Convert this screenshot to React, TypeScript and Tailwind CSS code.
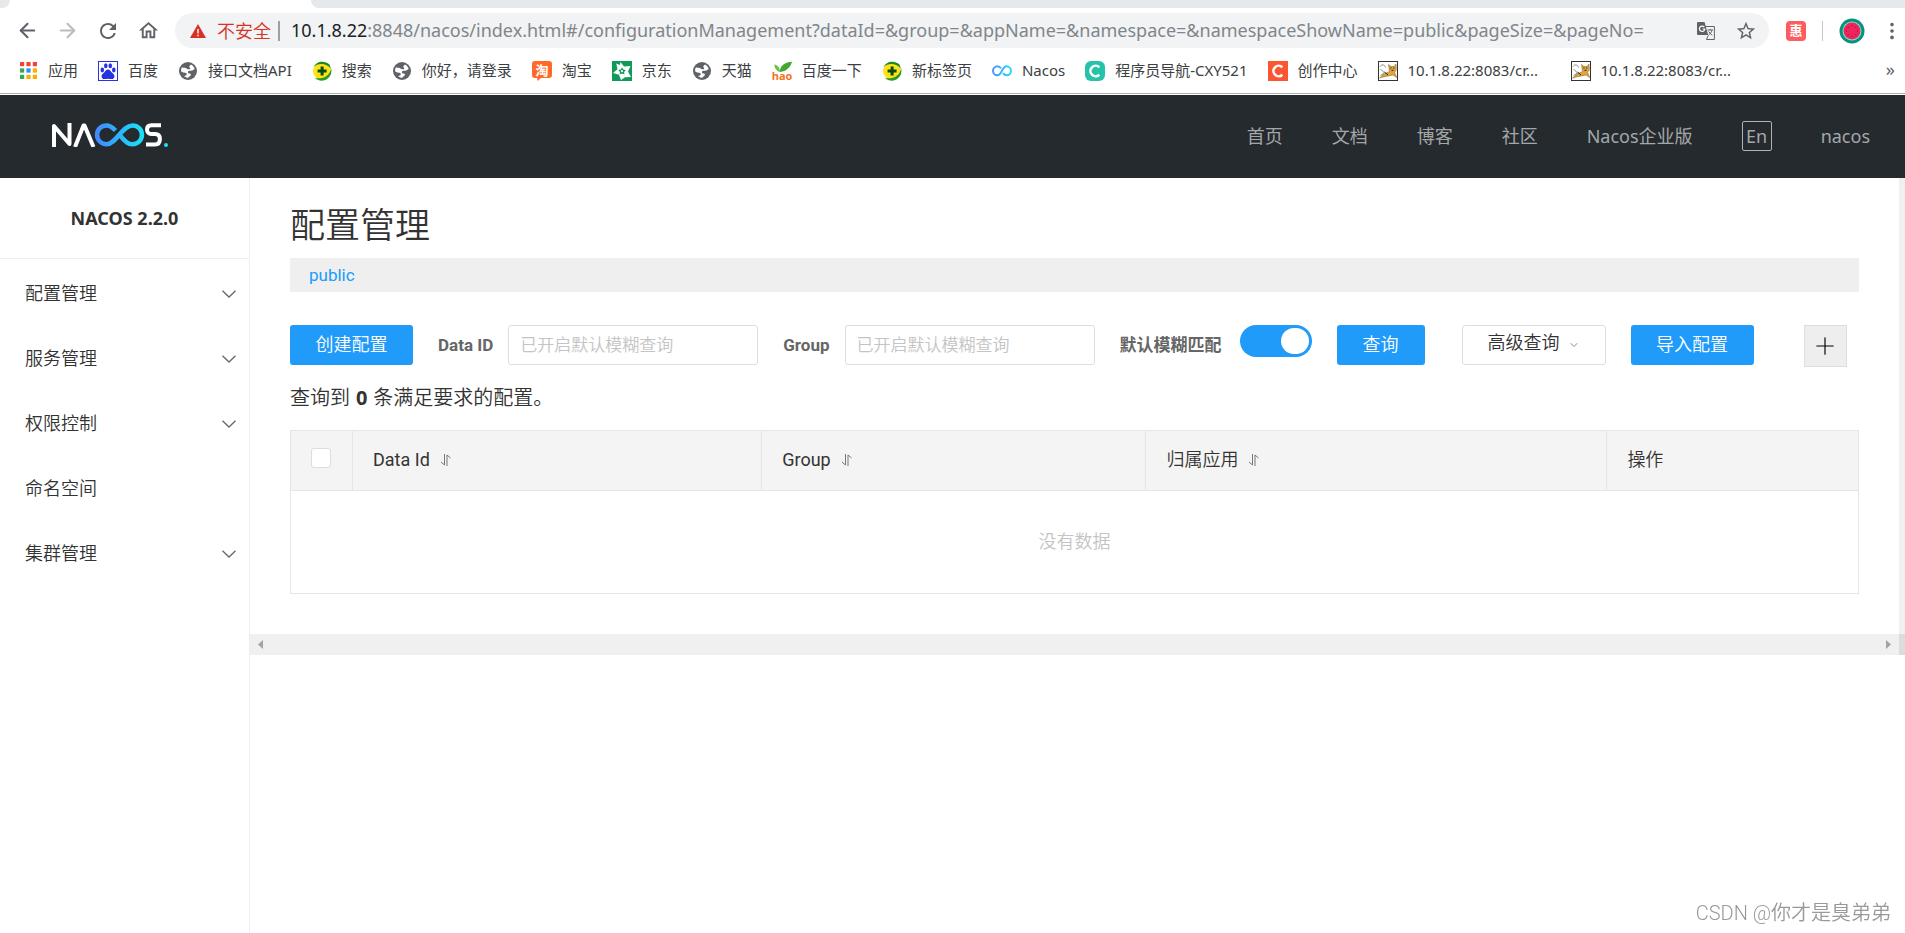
import type { ReactNode } from 'react'
import { ArrowLeft, ArrowRight, ChevronDown, MoreVertical, Plus } from 'lucide-react'
import { MdOutlineHome, MdRefresh, MdStarOutline } from 'react-icons/md'

const AppsIcon = () => {
  const colors = ['#f44336', '#f44336', '#f44336', '#34a853', '#2196f3', '#fbae00', '#34a853', '#fbae00', '#fbae00']
  return (
    <svg viewBox="0 0 17 17" className="size-[17px]">
      {colors.map((c, i) => (
        <rect key={i} x={(i % 3) * 6.4} y={Math.floor(i / 3) * 6.4} width="4.2" height="4.2" fill={c} />
      ))}
    </svg>
  )
}

const BaiduIcon = () => (
  <svg viewBox="0 0 20 20" className="size-5">
    <rect x="0.5" y="0.5" width="19" height="19" fill="#fff" stroke="#2932e1" />
    <g fill="#2932e1">
      <ellipse cx="4.3" cy="9" rx="1.8" ry="2.4" />
      <ellipse cx="7.8" cy="4.8" rx="1.8" ry="2.5" />
      <ellipse cx="12.3" cy="4.8" rx="1.8" ry="2.5" />
      <ellipse cx="15.8" cy="9" rx="1.8" ry="2.4" />
      <path d="M10 8.6c2 0 2.6 1.6 3.8 2.9 1.200 1.200 2.700 2 2.700 3.800 0 2-1.500 2.800-3 2.800-1.300 0-2.200-.4-3.500-.4s-2.200.4-3.500.4c-1.500 0-3-.8-3-2.800 0-1.800 1.500-2.600 2.700-3.800C7.400 10.200 8 8.600 10 8.600z" />
    </g>
  </svg>
)

const GlobeIcon = () => (
  <svg viewBox="0 0 18 18" className="size-[18px]">
    <circle cx="9" cy="9" r="9" fill="#5f6368" />
    <path d="M2.200 9.500c-.3-1.500 0-3 .8-4.200 1.500.9 3.800.2 5 1.500.8.9 2.800.7 3.200-.4.3-1-1.200-1.100-1-2 .2-.9 1.500-1 1.700-2 2 .9 3.300 2.600 3.900 4.600-1 .2-1.500 1.400-2.600 1.600-1.600.3-3.500-.5-4.200.8-.6 1.200.5 2 1.800 2.200 1.100.2 1.400 1 .8 2-.6.800-1.700 1-2.300 2.200-1.600 0-3-.6-4.200-1.500 1-.6 2.600-.8 2.700-2C7.900 10.500 5 11.200 2.200 9.500z" fill="#fff" />
  </svg>
)

const So360Icon = () => (
  <svg viewBox="0 0 20 20" className="size-5">
    <circle cx="10" cy="10" r="9" fill="#ffe21a" />
    <path d="M1.500 6C4 .5 12-1.500 17.500 3.500L19 8C15 2 6 1.500 1.500 6z" fill="#1c8a1c" />
    <path d="M3 17c5 4.500 13 3.500 16-4 .5-2 .6-4 .2-5.500C17.500 15 11 18.500 3 17z" fill="#2c9a20" />
    <path d="M8.600 5.500h3v3h3v3h-3v3h-3v-3h-3v-3h3z" fill="#0a4d0a" />
  </svg>
)

const TaobaoIcon = () => (
  <svg viewBox="0 0 20 20" className="size-5">
    <path d="M3 0h14a3 3 0 0 1 3 3v11a3 3 0 0 1-3 3H9l-3.500 3L5 17H3a3 3 0 0 1-3-3V3a3 3 0 0 1 3-3z" fill="#ff6a2b" />
    <text x="10" y="13.500" fontSize="13" fontWeight="700" textAnchor="middle" fill="#fff" fontFamily="'Noto Sans CJK SC', sans-serif">淘</text>
  </svg>
)

const JdIcon = () => (
  <svg viewBox="0 0 20 20" className="size-5">
    <rect width="20" height="20" fill="#109a5a" />
    <path d="M8.500 1l3.500 4.500 6.500-.5-2.500 5.500 3 5.500-6 .2L9 19l-2-5.200L1 12l4.500-3.800L4.300 2.500 8 4z" fill="#fff" />
    <path d="M10 6.300l1.300 2.200 2.500.4-1.700 2 .4 2.700-2.500-1.200-2.400 1.200.4-2.700-1.700-2 2.500-.4z" fill="#109a5a" />
    <circle cx="10" cy="10.200" r="1.100" fill="#fff" />
  </svg>
)

const HaoIcon = () => (
  <svg viewBox="0 0 20 20" className="size-5">
    <path d="M8 11C7.500 6 12 1 20 .8 18.500 6 14.500 10.500 8 11z" fill="#43a832" />
    <path d="M8 11C5.500 10.500 2.500 8 2.300 3.500 5.500 4 8 6.500 8 11z" fill="#6cc04a" />
    <text x="10" y="18.500" fontSize="11" fontWeight="700" textAnchor="middle" fill="#f4731c" fontFamily="'Open Sans', sans-serif">hao</text>
  </svg>
)

const NacosIcon = () => (
  <svg viewBox="0 0 20 20" className="size-5" fill="none" strokeWidth="2">
    <defs>
      <linearGradient id="nacos-mark" gradientUnits="userSpaceOnUse" x1="0" y1="0" x2="20" y2="0">
        <stop offset="0" stopColor="#4a90ff" />
        <stop offset="1" stopColor="#1fe0f5" />
      </linearGradient>
    </defs>
    <path stroke="url(#nacos-mark)" d="M9 7.400C8 6 7 5.300 5.500 5.300a4.500 4.500 0 0 0 0 9C10 14.300 10 5.300 14.500 5.300a4.500 4.500 0 0 1 0 9c-1.500 0-2.500-.7-3.500-2.100" />
  </svg>
)

const CIcon = ({ className }: { className: string }) => (
  <svg viewBox="0 0 20 20" className={`size-5 ${className}`} fill="none">
    <path d="M14.300 6.300a5.200 5.200 0 1 0 0 7.400" stroke="#fff" strokeWidth="2.600" />
  </svg>
)

const TomcatIcon = () => (
  <svg viewBox="0 0 20 20" className="size-5">
    <rect x="0.5" y="0.5" width="19" height="19" fill="#fff" stroke="#333" />
    <path d="M2 5.500c1.500-2.500 5-2 5.500 1M2.500 8L6.500 12l-4 2.500" stroke="#888" fill="none" />
    <path d="M1.500 17c2-1.500 4.500-4.500 8-5.500l2-1L10.500 3.500l2.500 2h3L18 3l.3 6-1.800 2.200 2.300 5.300-3.800-2.500-5 1L5 16z" fill="#e0a53a" stroke="#7a5a1c" strokeWidth=".5" />
    <path d="M12.300 7h1.200M15.200 7h1.200M13.500 9.300h2M6.500 11l3.500 3" stroke="#222" />
  </svg>
)

const TranslateIcon = () => (
  <svg viewBox="0 0 18 18" className="size-[18px]">
    <path d="M7 4.500h10.400v13H9.500" fill="#f1f3f4" stroke="#5f6368" />
    <path d="M1 0h6.500l3.700 13H1a1 1 0 0 1-1-1V1a1 1 0 0 1 1-1z" fill="#5f6368" />
    <path d="M7.300 5.200A2.700 2.700 0 1 0 7.800 7H5.500" stroke="#fff" strokeWidth="1.200" fill="none" />
    <path d="M10.500 8h5.500M13.200 7v1M15 8c-.5 2.500-2 4-3.500 5M11.800 9.500c.7 1.500 2 2.800 3.500 3.800M9.500 17.500l1.700-4" stroke="#5f6368" fill="none" />
  </svg>
)

const WatermelonAvatar = () => (
  <svg viewBox="0 0 26 26" className="size-[26px]">
    <circle cx="13" cy="13" r="12.500" fill="#0b8f80" />
    <circle cx="13" cy="13" r="9.500" fill="#7fe3c0" />
    <circle cx="13" cy="13" r="8.500" fill="#f0245c" />
    {[0, 45, 90, 135, 180, 225, 270, 315].map((a) => (
      <circle key={a} cx="13" cy="7.500" r=".6" fill="#7a1030" transform={`rotate(${a} 13 13)`} />
    ))}
  </svg>
)

const NacosLogo = () => (
  <svg viewBox="0 0 116 24" className="w-[116px] h-6" fill="none" role="img" aria-label="NACOS">
    <defs>
      <linearGradient id="nacos-logo" gradientUnits="userSpaceOnUse" x1="43" y1="0" x2="92" y2="0">
        <stop offset="0" stopColor="#4487ff" />
        <stop offset="1" stopColor="#17e3f6" />
      </linearGradient>
    </defs>
    <g stroke="#fff" strokeWidth="4" strokeLinejoin="round">
      <path d="M2 24V3l15.500 18V0" />
      <path d="M23 24L31.500 2.500h1L41.500 24" />
      <path d="M109 2.200h-9.500c-3 0-4.500 1.800-4.500 4.300 0 2.600 1.500 4.600 4.500 4.600h3.500c3.200 0 4.900 2 4.900 5 0 3.200-1.700 5.400-4.900 5.400H94" />
    </g>
    <path stroke="url(#nacos-logo)" strokeWidth="4.500" d="M63.500 7.500C60.500 4.300 58.500 2.400 54.500 2.400a9.400 9.400 0 0 0 0 18.900C64 21.300 70 2.400 80.500 2.400a9.400 9.400 0 0 1 0 18.900c-4.500 0-7-2.500-12-8.300" />
    <circle cx="114" cy="22" r="2" fill="#17e3f6" />
  </svg>
)

const SortIcon = () => (
  <svg viewBox="0 0 11 12" className="w-[11px] h-3" fill="none" stroke="#777">
    <path d="M4.500 0v11L1 8M7 12V1l3.500 3" />
  </svg>
)

const bookmarks: { label: string; icon: ReactNode; wide?: boolean }[] = [
  { label: '应用', icon: <AppsIcon /> },
  { label: '百度', icon: <BaiduIcon /> },
  { label: '接口文档API', icon: <GlobeIcon /> },
  { label: '搜索', icon: <So360Icon /> },
  { label: '你好，请登录', icon: <GlobeIcon /> },
  { label: '淘宝', icon: <TaobaoIcon /> },
  { label: '京东', icon: <JdIcon /> },
  { label: '天猫', icon: <GlobeIcon /> },
  { label: '百度一下', icon: <HaoIcon /> },
  { label: '新标签页', icon: <So360Icon /> },
  { label: 'Nacos', icon: <NacosIcon /> },
  { label: '程序员导航-CXY521', icon: <CIcon className="rounded-md bg-[#25c3a7]" /> },
  { label: '创作中心', icon: <CIcon className="bg-[#fc5531]" /> },
  { label: '10.1.8.22:8083/cr...', icon: <TomcatIcon />, wide: true },
  { label: '10.1.8.22:8083/cr...', icon: <TomcatIcon />, wide: true },
]

const navLinks = ['首页', '文档', '博客', '社区', 'Nacos企业版']

const menu = [
  { label: '配置管理', expandable: true },
  { label: '服务管理', expandable: true },
  { label: '权限控制', expandable: true },
  { label: '命名空间', expandable: false },
  { label: '集群管理', expandable: true },
]

function BrowserBar() {
  return (
    <div className="bg-white border-b border-[#a9adb0] font-['Noto_Sans','Noto_Sans_CJK_SC',sans-serif]">
      <div className="flex h-2 bg-[#e5e9ec]">
        <div className="w-[10px] bg-white"><div className="h-2 rounded-br-lg bg-[#e5e9ec]" /></div>
        <div className="w-[301px] bg-white" />
        <div className="flex-1 bg-white"><div className="h-2 rounded-bl-lg bg-[#e5e9ec]" /></div>
      </div>
      <div className="flex items-center pt-[5px] pr-[2px] pl-4 text-[#5f6368]">
        <div className="flex items-center gap-[17px]">
          <button aria-label="后退"><ArrowLeft size={23} strokeWidth={2.2} /></button>
          <button aria-label="前进" className="text-[#babcbe]"><ArrowRight size={23} strokeWidth={2.2} /></button>
          <button aria-label="刷新"><MdRefresh size={24} /></button>
          <button aria-label="主页"><MdOutlineHome size={23} /></button>
        </div>
        <div className="ml-[15px] flex h-[35px] flex-1 items-center rounded-full bg-[#f1f3f4] pr-3 pl-[15px]">
          <svg viewBox="0 0 16 14" className="mr-[11px] h-[14px] w-4 shrink-0">
            <path d="M8 0l8 14H0z" fill="#d93025" />
            <path d="M8 5v4.500M8 10.800v1.500" stroke="#fff" strokeWidth="1.400" />
          </svg>
          <span className="text-lg font-[350] whitespace-nowrap text-[#d93025]">不安全</span>
          <span className="mx-[7px] h-5 w-[2px] bg-[#9aa0a6]" />
          <div className="ml-1 flex-1 pb-[2px] text-lg whitespace-nowrap text-[#80868b]">
            <span className="text-[#202124]">10.1.8.22</span>:8848/nacos/index.html#/configurationManagement?dataId=&amp;group=&amp;appName=&amp;namespace=&amp;namespaceShowName=public&amp;pageSize=&amp;pageNo=
          </div>
          <div className="flex items-center gap-5">
            <button aria-label="翻译"><TranslateIcon /></button>
            <button aria-label="收藏"><MdStarOutline size={22} /></button>
          </div>
        </div>
        <div className="flex items-center pl-[17px]">
          <button aria-label="扩展程序" className="flex size-5 items-center justify-center rounded-sm bg-[#ff5c5f] text-[13px] leading-none font-bold text-white">惠</button>
          <span className="mx-[16px] h-5 w-px bg-[#c4c7ca]" />
          <button aria-label="账户"><WatermelonAvatar /></button>
          <button aria-label="更多" className="ml-4"><MoreVertical size={22} fill="currentColor" /></button>
        </div>
      </div>
      <div className="flex h-[45px] items-center pr-[10px] pl-[18px]">
        <div className="flex flex-1 items-center gap-5">
          {bookmarks.map((b, i) => (
            <a key={i} href="#" className="flex items-center gap-[10px] text-[15px] whitespace-nowrap text-[#3c4043]">
              <span className="flex size-5 items-center justify-center">{b.icon}</span>
              <span className={b.wide ? 'w-[143px]' : ''}>{b.label}</span>
            </a>
          ))}
        </div>
        <button aria-label="更多书签" className="pb-1 text-lg text-[#5f6368]">»</button>
      </div>
    </div>
  )
}

function Header() {
  return (
    <header className="flex h-[84px] items-center justify-between border-t border-white bg-[#252a2f] pr-[35px] pb-[2px] pl-[52px] font-['Noto_Sans','Noto_Sans_CJK_SC',sans-serif]">
      <a href="#" className="pb-[2px]"><NacosLogo /></a>
      <nav className="flex items-center gap-[49px] text-lg text-[#a4a7a9]">
        {navLinks.map((label) => (
          <a key={label} href="#">{label}</a>
        ))}
        <button className="size-[30px] rounded-xs border border-[#b0b3b5] leading-6">En</button>
        <a href="#">nacos</a>
      </nav>
    </header>
  )
}

function Sidebar() {
  return (
    <aside className="w-[250px] shrink-0 border-r border-[#eee]">
      <h2 className="border-b border-[#eee] text-center font-['Noto_Sans',sans-serif] text-lg leading-[80px] font-bold">
        NACOS 2.2.0
      </h2>
      <ul className="pt-[2px]">
        {menu.map((item) => (
          <li key={item.label}>
            <button className="flex h-[65px] w-full items-center justify-between pr-[13px] pl-[25px] text-lg font-[350]">
              {item.label}
              {item.expandable && (
                <svg viewBox="0 0 14 8" className="h-2 w-[14px]" fill="none" stroke="#666" strokeWidth="1.300">
                  <path d="M.5.8L7 7l6.500-6.200" />
                </svg>
              )}
            </button>
          </li>
        ))}
      </ul>
    </aside>
  )
}

function Filters() {
  const input = 'ml-[15px] h-10 w-[250px] rounded-[3px] border border-[#dcdee3] px-[11px] font-[350] placeholder:text-[#c4c4c4]'
  const primary = 'h-10 rounded-[3px] bg-[#209bfa] text-lg font-[350] text-white'
  const label = 'ml-[25px] leading-10 font-bold text-[#666]'

  return (
    <form className="mt-[33px] flex items-start text-[17px] whitespace-nowrap">
      <button type="button" className={`${primary} w-[123px]`}>创建配置</button>
      <label htmlFor="data-id" className={label}>Data ID</label>
      <input id="data-id" className={input} placeholder="已开启默认模糊查询" />
      <label htmlFor="group" className={label}>Group</label>
      <input id="group" className={input} placeholder="已开启默认模糊查询" />
      <label htmlFor="fuzzy" className={label}>默认模糊匹配</label>
      <input
        id="fuzzy"
        type="checkbox"
        role="switch"
        defaultChecked
        className="ml-[18px] h-8 w-[72px] appearance-none rounded-full bg-[#209bfa] p-[3px] before:ml-auto before:block before:h-[26px] before:w-7 before:rounded-full before:bg-white"
      />
      <button type="button" className={`${primary} ml-[25px] w-[88px]`}>查询</button>
      <button type="button" className="ml-[37px] flex h-10 w-36 items-center justify-center gap-2 rounded-[3px] border border-[#dcdee3] pb-1 text-lg font-[350]">
        高级查询
        <ChevronDown size={12} strokeWidth={2} className="mt-1 text-[#888]" />
      </button>
      <button type="button" className={`${primary} ml-[25px] w-[123px]`}>导入配置</button>
      <button type="button" aria-label="新建" className="ml-[50px] flex h-[42px] w-[43px] items-center justify-center border border-[#ddd] bg-[#eee] text-black">
        <Plus size={28} strokeWidth={1} />
      </button>
    </form>
  )
}

function ConfigTable() {
  const th = 'border border-[#e6e6e6] px-5 pb-[2px] text-left'
  return (
    <table className="w-full table-fixed border-collapse border border-[#e6e6e6] text-lg">
      <colgroup>
        <col className="w-[62px]" />
        <col className="w-[26.1%]" />
        <col className="w-[24.5%]" />
        <col className="w-[29.4%]" />
        <col />
      </colgroup>
      <thead>
        <tr className="h-[60px] bg-[#f4f4f4]">
          <th className={th}>
            <input type="checkbox" aria-label="全选" className="mb-1 block size-5 appearance-none rounded-[3px] border border-[#ddd] bg-white" />
          </th>
          <th className={`${th} font-normal`}>
            <button className="flex items-center gap-[10px]">Data Id <SortIcon /></button>
          </th>
          <th className={`${th} font-normal`}>
            <button className="flex items-center gap-[10px]">Group <SortIcon /></button>
          </th>
          <th className={`${th} font-[350]`}>
            <button className="flex items-center gap-[10px]">归属应用 <SortIcon /></button>
          </th>
          <th className={`${th} font-[350]`}>操作</th>
        </tr>
      </thead>
      <tbody>
        <tr className="h-[103px]">
          <td colSpan={5} className="text-center font-[350] text-[#c4c4c4]">没有数据</td>
        </tr>
      </tbody>
    </table>
  )
}

export default function App() {
  return (
    <div className="flex min-h-screen flex-col bg-white font-['Roboto','Noto_Sans_CJK_SC',sans-serif] text-[#333]">
      <BrowserBar />
      <Header />
      <div className="flex flex-1">
        <Sidebar />
        <div className="flex min-w-0 flex-1 items-start">
          <main className="min-w-0 flex-1">
            <div className="px-10 pt-[18px] pb-10">
              <h1 className="text-[35px] leading-[62px] font-[350]">配置管理</h1>
              <div className="bg-[#efefef] px-[19px] text-[17px] leading-[34px]">
                <a href="#" className="text-[#209bfa]">public</a>
              </div>
              <Filters />
              <p className="mt-[13px] mb-[14px] text-xl leading-9 font-[350]">
                查询到 <strong className="mx-px font-['Noto_Sans',sans-serif] font-bold">0</strong> 条满足要求的配置。
              </p>
              <ConfigTable />
            </div>
            <div className="flex h-[21px] items-center justify-between bg-[#f0f0f0] px-2">
              <button aria-label="向左滚动">
                <svg viewBox="0 0 5 9" className="h-[9px] w-[5px]"><path d="M5 0v9L0 4.500z" fill="#a3a3a3" /></svg>
              </button>
              <button aria-label="向右滚动">
                <svg viewBox="0 0 5 9" className="h-[9px] w-[5px]"><path d="M0 0v9l5-4.500z" fill="#a3a3a3" /></svg>
              </button>
            </div>
          </main>
          <div className="flex w-[6px] flex-col self-stretch">
            <div className="h-[456px] bg-[#f0f0f0]" />
            <div className="h-[21px] bg-[#dcdcdc]" />
          </div>
        </div>
      </div>
      <div className="fixed right-[14px] bottom-[6px] text-xl leading-7 font-[350] text-[#999]">CSDN @你才是臭弟弟</div>
    </div>
  )
}
